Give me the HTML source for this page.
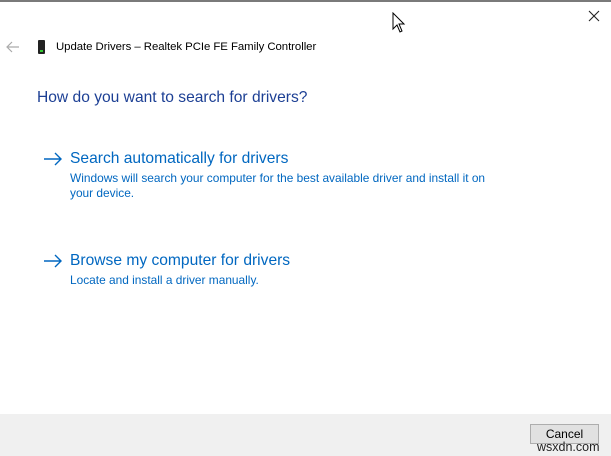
<!DOCTYPE html>
<html><head><style>
body{margin:0;width:611px;height:456px;background:#fff;position:relative;overflow:hidden;font-family:"Liberation Sans",sans-serif;}
.t{position:absolute;white-space:nowrap;}
</style></head><body>
<div style="position:absolute;left:0;top:0;width:611px;height:2px;background:#7a7a7a"></div>
<svg class="t" style="left:588px;top:10px" width="12" height="12"><path d="M1 1L11 11M11 1L1 11" stroke="#222" stroke-width="1.1"/></svg>
<svg class="t" style="left:392px;top:12px" width="14" height="22"><path d="M1 1V17L5 13L8 20L10 19L7 12H12Z" fill="#fff" stroke="#000" stroke-width="1"/></svg>
<svg class="t" style="left:6px;top:41px" width="14" height="12"><path d="M13 6H2M6 1L1 6L6 11" fill="none" stroke="#aaa" stroke-width="1.2"/></svg>
<div class="t" style="left:38px;top:40px;width:7px;height:14px;background:#222;border-radius:1px"></div>
<div class="t" style="left:40px;top:50px;width:3px;height:2px;background:#3c3"></div>
<div class="t" style="left:56px;top:41px;font-size:11.4px;color:#000;letter-spacing:-0.05px">Update Drivers – Realtek PCIe FE Family Controller</div>
<div class="t" style="left:37px;top:89px;font-size:15.6px;color:#1c3f94">How do you want to search for drivers?</div>
<svg class="t" style="left:43px;top:152px" width="20" height="14"><path d="M1 7H18M12 1L18 7L12 13" fill="none" stroke="#0067c0" stroke-width="1.4"/></svg>
<div class="t" style="left:70px;top:150px;font-size:15.6px;color:#0067c0">Search automatically for drivers</div>
<div class="t" style="left:70px;top:171px;font-size:11.9px;color:#0067c0;line-height:15px">Windows will search your computer for the best available driver and install it on<br>your device.</div>
<svg class="t" style="left:43px;top:254px" width="20" height="14"><path d="M1 7H18M12 1L18 7L12 13" fill="none" stroke="#0067c0" stroke-width="1.4"/></svg>
<div class="t" style="left:70px;top:252px;font-size:15.6px;color:#0067c0">Browse my computer for drivers</div>
<div class="t" style="left:70px;top:273px;font-size:11.9px;color:#0067c0">Locate and install a driver manually.</div>
<div style="position:absolute;left:0;top:414px;width:611px;height:42px;background:#f0f0f0"></div>
<div class="t" style="left:530px;top:424px;width:69px;height:20px;border:1px solid #adadad;background:#e1e1e1;box-sizing:border-box;font-size:12px;text-align:center;line-height:18px">Cancel</div>
<div class="t" style="left:537px;top:440px;font-size:12.5px;color:#222">wsxdn.com</div>
</body></html>
